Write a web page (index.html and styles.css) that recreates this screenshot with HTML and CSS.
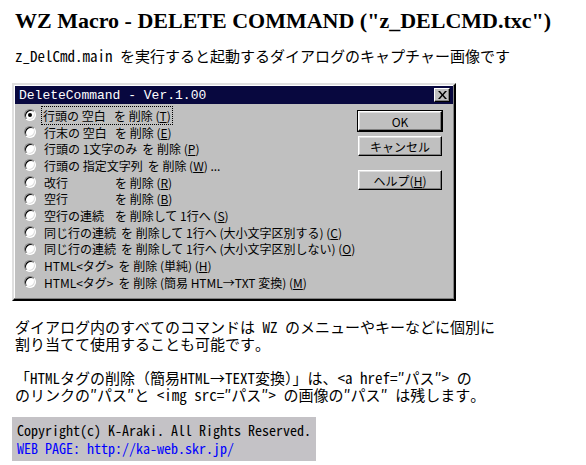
FILE: index.html
```html
<!DOCTYPE html>
<html lang="ja">
<head>
    <meta charset="UTF-8">
    <title>WZ Macro - DELETE COMMAND</title>
    <link rel="stylesheet" href="styles.css">
</head>
<body>
    <h1>WZ Macro - DELETE COMMAND ("z_DELCMD.txc")</h1>
    <p class="lead">z_DelCmd.main を実行すると起動するダイアログのキャプチャー画像です</p>

    <div class="dialog">
        <div class="titlebar">
            <span class="title">DeleteCommand - Ver.1.00</span>
            <span class="close">
                <svg width="9" height="8" viewBox="0 0 9 8"><path d="M0 0h2l2.5 3 2.5-3h2l-3.5 4 3.5 4h-2l-2.5-3-2.5 3h-2l3.5-4z" fill="#000"/></svg>
            </span>
        </div>
        <div class="dialog-body">
            <ul class="options">
                <li class="checked"><span class="radio"></span><span class="focus"><span class="lbl">行頭の 空白</span>を 削除 (<u>T</u>)</span></li>
                <li><span class="radio"></span><span class="lbl">行末の 空白</span>を 削除 (<u>E</u>)</li>
                <li><span class="radio"></span><span class="lbl">行頭の 1文字のみ</span>を 削除 (<u>P</u>)</li>
                <li><span class="radio"></span><span class="lbl">行頭の 指定文字列</span>を 削除 (<u>W</u>) ...</li>
                <li><span class="radio"></span><span class="lbl">改行</span>を 削除 (<u>R</u>)</li>
                <li><span class="radio"></span><span class="lbl">空行</span>を 削除 (<u>B</u>)</li>
                <li><span class="radio"></span><span class="lbl">空行の連続</span>を 削除して 1行へ (<u>S</u>)</li>
                <li><span class="radio"></span><span class="lbl">同じ行の連続</span>を 削除して 1行へ (大小文字区別する) (<u>C</u>)</li>
                <li><span class="radio"></span><span class="lbl">同じ行の連続</span>を 削除して 1行へ (大小文字区別しない) (<u>O</u>)</li>
                <li><span class="radio"></span><span class="lbl">HTML&lt;タグ&gt;</span>を 削除 (単純) (<u>H</u>)</li>
                <li><span class="radio"></span><span class="lbl">HTML&lt;タグ&gt;</span>を 削除 (簡易 HTML→TXT 変換) (<u>M</u>)</li>
            </ul>
            <div class="buttons">
                <button class="btn default">OK</button>
                <button class="btn">キャンセル</button>
                <button class="btn help">ヘルプ(<u>H</u>)</button>
            </div>
        </div>
    </div>

    <p class="text">ダイアログ内のすべてのコマンドは WZ のメニューやキーなどに個別に<br>割り当てて使用することも可能です。</p>
    <p class="text">「HTMLタグの削除（簡易HTML→TEXT変換）」は、&lt;a href=″パス″&gt; の<br>のリンクの″パス″と &lt;img src=″パス″&gt; の画像の″パス″ は残します。</p>

    <div class="copyright">
        Copyright(c) K-Araki. All Rights Reserved.<br>
        <a href="http://ka-web.skr.jp/">WEB PAGE: http://ka-web.skr.jp/</a>
    </div>
</body>
</html>
```

FILE: styles.css
```css
body {
    margin: 0;
    padding: 0 12px;
    background-color: #fff;
    color: #000;
    font-family: "Noto Sans Mono CJK JP", "Noto Sans CJK JP", monospace;
    font-size: 15px;
}

h1 {
    font-family: "Liberation Serif", serif;
    font-size: 22px;
    font-weight: bold;
    line-height: 28px;
    white-space: nowrap;
    margin: 7px 0 0 3px;
}

.lead {
    margin: 12px 0 0 3px;
    line-height: 17px;
}

/* captured dialog */
.dialog {
    width: 440px;
    margin-top: 19px;
    background-color: #c0c0c0;
    border: 2px solid;
    border-color: #dfdfdf #000 #000 #dfdfdf;
    box-shadow: inset -1px -1px 0 #808080, inset 1px 1px 0 #fff;
    font-family: "Noto Sans CJK JP", sans-serif;
    font-size: 12px;
}

.titlebar {
    margin: 1px;
    height: 18px;
    background-color: #08083f;
    display: flex;
    align-items: center;
    justify-content: space-between;
    padding: 0 3px 0 4px;
}

.title {
    color: #fff;
    font-family: "Liberation Mono", monospace;
    font-size: 13px;
}

.close {
    width: 16px;
    height: 14px;
    background-color: #c0c0c0;
    box-sizing: border-box;
    border: 1px solid;
    border-color: #fff #000 #000 #fff;
    box-shadow: inset -1px -1px 0 #808080;
    display: flex;
    align-items: center;
    justify-content: center;
}

.dialog-body {
    display: flex;
    justify-content: space-between;
    padding: 2px 12px 8px 10px;
}

.options {
    list-style: none;
    margin: 0;
    padding: 0;
}

.options li {
    height: 16.7px;
    display: flex;
    align-items: center;
    white-space: nowrap;
}

.radio {
    width: 12px;
    height: 12px;
    box-sizing: border-box;
    border-radius: 50%;
    background-color: #fff;
    border: 1px solid;
    border-color: #808080 #fff #fff #808080;
    box-shadow: inset 1px 1px 0 #000, inset -1px -1px 0 #dfdfdf;
    margin-right: 8px;
    position: relative;
}

.checked .radio::after {
    content: "";
    position: absolute;
    left: 3px;
    top: 3px;
    width: 4px;
    height: 4px;
    border-radius: 50%;
    background-color: #000;
}

.focus {
    outline: 1px dotted #000;
    outline-offset: 0;
    margin-left: -2px;
    padding: 0 1px;
}

.lbl {
    display: inline-block;
    min-width: 66px;
    margin-right: 5px;
}

u {
    text-decoration: underline;
}

.buttons {
    display: flex;
    flex-direction: column;
    gap: 5px;
    padding-top: 4px;
}

.btn {
    width: 84px;
    height: 20px;
    padding: 0;
    background-color: #c0c0c0;
    border: 1px solid;
    border-color: #fff #000 #000 #fff;
    box-shadow: inset -1px -1px 0 #808080, inset 1px 1px 0 #dfdfdf;
    font-family: "Noto Sans CJK JP", sans-serif;
    font-size: 12px;
    color: #000;
}

.btn.default {
    outline: 1px solid #000;
}

.btn.help {
    margin-top: 9px;
}

.text {
    margin: 17px 0 0 3px;
    line-height: 17px;
}

.text + .text {
    margin-top: 17px;
}

.copyright {
    display: inline-block;
    margin-top: 14px;
    padding: 4px 5px 4px 5px;
    background-color: #c4c2c6;
    font-size: 14px;
    line-height: 18px;
}

.copyright a {
    color: #0000ff;
    text-decoration: none;
}
```
